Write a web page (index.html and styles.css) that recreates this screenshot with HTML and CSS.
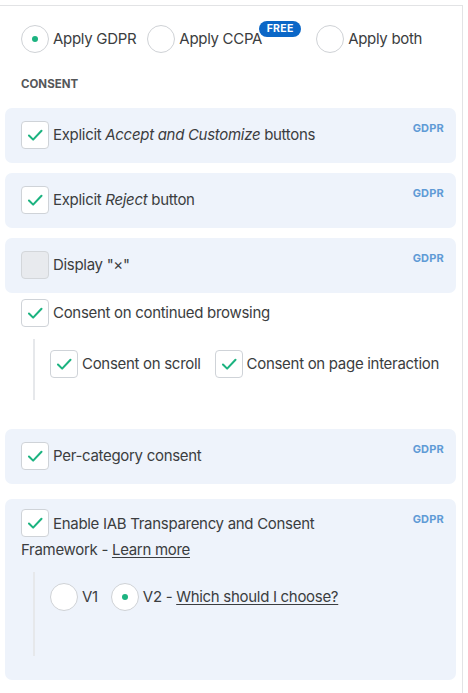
FILE: index.html
```html
<!DOCTYPE html>
<html>
<head>
<meta charset="utf-8">
<link rel="stylesheet" href="styles.css">
</head>
<body>
<div class="panel">
  <div class="regions">
    <label class="region">
      <span class="radio on"></span>
      <span class="rtext">Apply GDPR</span>
    </label>
    <label class="region region-ccpa">
      <span class="radio"></span>
      <span class="rtext">Apply CCPA<span class="badge">FREE</span></span>
    </label>
    <label class="region">
      <span class="radio"></span>
      <span class="rtext">Apply both</span>
    </label>
  </div>

  <div class="heading">CONSENT</div>

  <div class="card">
    <div class="opt"><span class="cb checked"><svg viewBox="0 0 28 28"><path d="M7.5 14.5l4.5 4.5 9-9.5"/></svg></span><span>Explicit <em>Accept and Customize</em> buttons</span></div>
    <span class="tag">GDPR</span>
  </div>

  <div class="card">
    <div class="opt"><span class="cb checked"><svg viewBox="0 0 28 28"><path d="M7.5 14.5l4.5 4.5 9-9.5"/></svg></span><span>Explicit <em>Reject</em> button</span></div>
    <span class="tag">GDPR</span>
  </div>

  <div class="card">
    <div class="opt"><span class="cb empty"></span><span>Display "×"</span></div>
    <span class="tag">GDPR</span>
  </div>

  <div class="plain">
    <div class="opt"><span class="cb checked"><svg viewBox="0 0 28 28"><path d="M7.5 14.5l4.5 4.5 9-9.5"/></svg></span><span>Consent on continued browsing</span></div>
  </div>

  <div class="sub sub-browse">
    <div class="opt"><span class="cb checked"><svg viewBox="0 0 28 28"><path d="M7.5 14.5l4.5 4.5 9-9.5"/></svg></span><span>Consent on scroll</span></div>
    <div class="opt"><span class="cb checked"><svg viewBox="0 0 28 28"><path d="M7.5 14.5l4.5 4.5 9-9.5"/></svg></span><span>Consent on page interaction</span></div>
  </div>

  <div class="card card-cat">
    <div class="opt"><span class="cb checked"><svg viewBox="0 0 28 28"><path d="M7.5 14.5l4.5 4.5 9-9.5"/></svg></span><span>Per-category consent</span></div>
    <span class="tag">GDPR</span>
  </div>

  <div class="card card-iab">
    <div class="iab-top">
      <p class="iab-label"><span class="cb checked inline"><svg viewBox="0 0 28 28"><path d="M7.5 14.5l4.5 4.5 9-9.5"/></svg></span><span>Enable IAB Transparency and Consent</span> <span>Framework - </span><a class="link" href="#">Learn more</a></p>
      <span class="tag">GDPR</span>
    </div>
    <div class="sub sub-iab">
      <div class="opt"><span class="radio"></span><span>V1</span></div>
      <div class="opt"><span class="radio on"></span><span>V2 - <a class="link" href="#">Which should I choose?</a></span></div>
    </div>
  </div>
</div>
</body>
</html>
```

FILE: styles.css
```css
* { box-sizing: border-box; }
html, body { margin: 0; padding: 0; background: #fff; }
body {
  font-family: Inter, "Noto Sans", "Liberation Sans", sans-serif;
  font-size: 15px;
  letter-spacing: -0.3px;
  color: #3b3d40;
}
.panel {
  margin-top: 5px;
  width: 463px;
  min-height: 688px;
  border-top: 1px solid #e2e3e5;
  border-right: 1px solid #e2e3e5;
  padding: 0 6px 0 5px;
}
.regions {
  display: flex;
  align-items: center;
  padding: 19px 0 0 16px;
}
.region {
  display: flex;
  align-items: center;
  gap: 4px;
  margin-right: 11px;
}
.region-ccpa { margin-right: 54px; }
.rtext { position: relative; line-height: 20px; }
.badge {
  position: absolute;
  left: calc(100% - 3px);
  top: -8px;
  width: 42px;
  height: 16px;
  border-radius: 8px;
  background: #0b67c7;
  color: #fff;
  font-size: 10.5px;
  font-weight: 700;
  line-height: 16px;
  text-align: center;
  letter-spacing: 0.3px;
}
.radio {
  width: 28px;
  height: 28px;
  flex: none;
  border-radius: 50%;
  border: 1px solid #cfd2d6;
  background: #fff;
  display: flex;
  align-items: center;
  justify-content: center;
}
.radio.on::after {
  content: "";
  width: 6px;
  height: 6px;
  border-radius: 50%;
  background: #1cb380;
}
.heading {
  margin: 23px 0 0 16px;
  font-size: 11.5px;
  font-weight: 700;
  line-height: 16px;
  letter-spacing: 0;
  color: #555759;
}
.card {
  background: #eef3fb;
  border-radius: 7px;
  padding: 13px 12px 14px 16px;
  display: flex;
  align-items: flex-start;
  margin-top: 10px;
}
.heading + .card { margin-top: 16px; }
.opt {
  display: flex;
  align-items: center;
  gap: 4px;
  line-height: 20px;
}
.card > .opt { flex: 1; }
.tag {
  flex: none;
  margin-top: 1px;
  font-size: 11px;
  font-weight: 700;
  color: #5f9bd6;
  line-height: 13px;
  letter-spacing: 0.2px;
}
.cb {
  width: 28px;
  height: 28px;
  flex: none;
  border-radius: 4px;
  border: 1px solid #cfd3d8;
  background: #fff;
  display: inline-flex;
  align-items: center;
  justify-content: center;
}
.cb svg { width: 28px; height: 28px; }
.cb svg path {
  fill: none;
  stroke: #1cb380;
  stroke-width: 2.2;
  stroke-linecap: round;
  stroke-linejoin: round;
}
.cb.empty { background: #e8eaee; border-color: #d3d6da; }
.plain { padding: 6px 0 0 16px; }
.sub {
  margin-left: 28px;
  border-left: 2px solid #e6e8eb;
  padding-left: 15px;
  display: flex;
}
.sub-browse {
  margin-top: 12px;
  padding-top: 11px;
  padding-bottom: 22px;
  gap: 14px;
}
.card-cat { margin-top: 29px; }
.card-iab {
  margin-top: 15px;
  display: block;
  padding: 12px 12px 24px 16px;
}
.iab-top {
  display: flex;
  align-items: flex-start;
  gap: 50px;
}
.iab-label {
  flex: 1;
  margin: 0;
  line-height: 25px;
}
.iab-top .tag { margin-top: 2px; }
.cb.inline {
  vertical-align: middle;
  margin: -3px 4px -1px 0;
  position: relative;
  top: -1px;
}
.link { color: #3b3d40; text-decoration: underline; text-underline-offset: 2px; }
.sub-iab {
  margin-left: 12px;
  margin-top: 10px;
  padding-top: 11px;
  padding-bottom: 45px;
  gap: 13px;
}
```
